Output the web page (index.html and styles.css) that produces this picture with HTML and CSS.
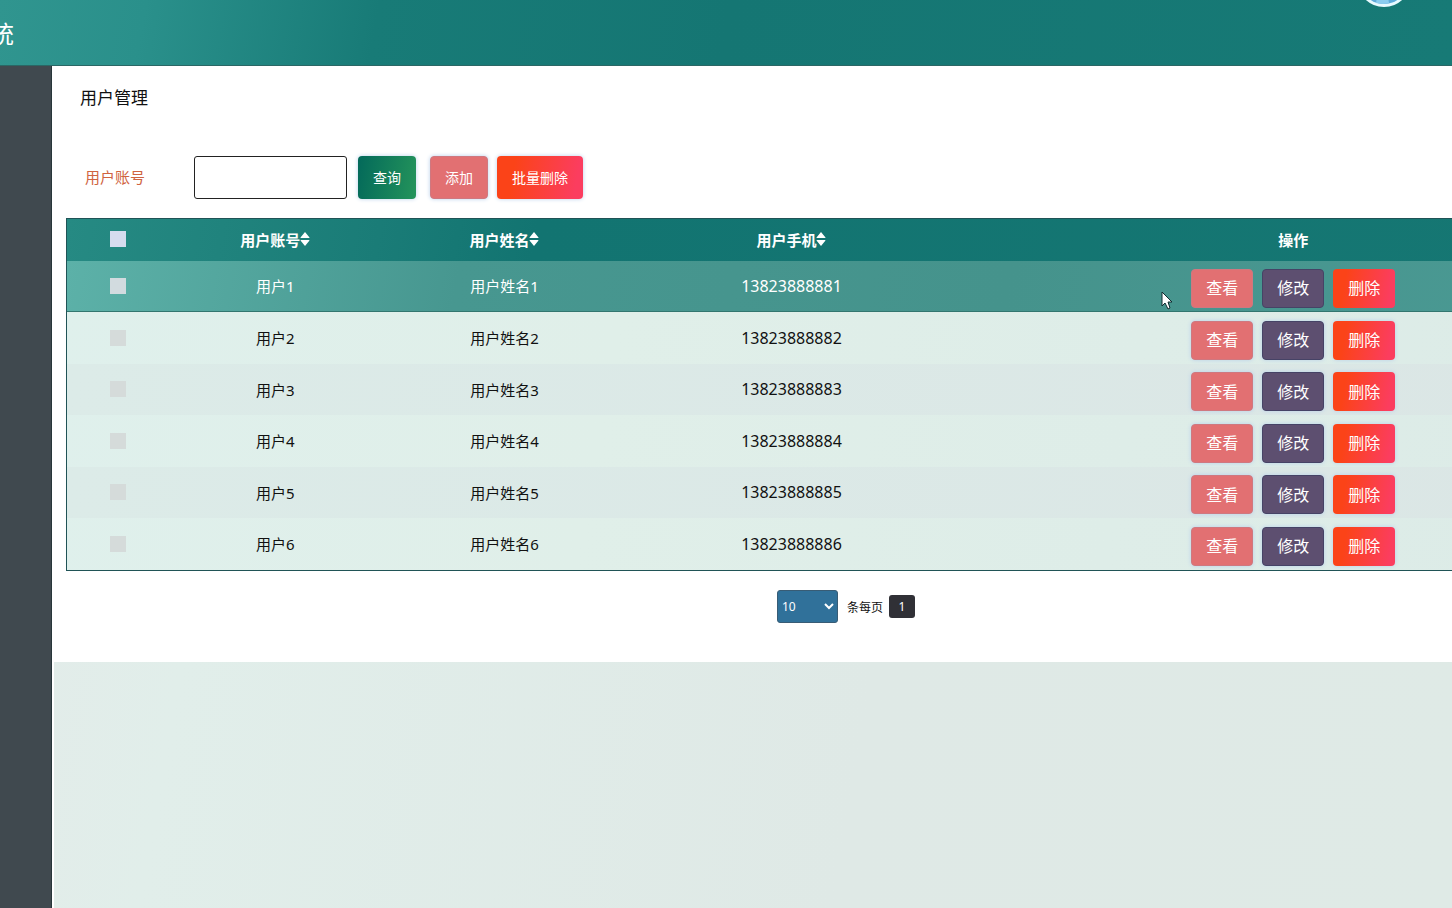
FILE: index.html
```html
<!DOCTYPE html>
<html lang="zh-CN">
<head>
<meta charset="utf-8">
<title>用户管理</title>
<link rel="stylesheet" href="styles.css">
</head>
<body>
<header class="topbar">
  <h1 class="brand">统</h1>
  <svg class="avatar" viewBox="0 0 54 54" aria-hidden="true">
    <circle cx="27" cy="27" r="27" fill="#e8faff"/>
    <circle cx="27" cy="27" r="24" fill="#5eabdb"/>
    <path d="M19 50q8 2 13 0l-1-6H20z" fill="#8ccdf0"/>
  </svg>
</header>
<div class="shell">
  <aside class="sidebar"></aside>
  <main class="content">
    <section class="panel">
      <div class="titlebar">
        <h2 class="title">用户管理</h2>
      </div>
      <form class="search">
        <label class="search-label" for="account">用户账号</label>
        <input class="search-input" id="account" type="text">
        <button class="btn btn-query" type="button">查询</button>
        <button class="btn btn-add" type="button">添加</button>
        <button class="btn btn-delete" type="button">批量删除</button>
      </form>
      <table class="grid">
        <colgroup><col class="c-check"><col class="c-account"><col class="c-name"><col class="c-phone"><col class="c-ops"></colgroup>
        <thead>
          <tr>
            <th><input class="check" type="checkbox" aria-label="全选"></th>
            <th><span class="sort">用户账号<svg class="arrows" viewBox="0 0 10 14" aria-hidden="true"><path d="M5 0L9.500 5.500Q9.500 6 9 6H1Q.5 6 .5 5.500zM5 14L.5 8.500Q.5 8 1 8H9Q9.500 8 9.500 8.500z"/></svg></span></th>
            <th><span class="sort">用户姓名<svg class="arrows" viewBox="0 0 10 14" aria-hidden="true"><path d="M5 0L9.500 5.500Q9.500 6 9 6H1Q.5 6 .5 5.500zM5 14L.5 8.500Q.5 8 1 8H9Q9.500 8 9.500 8.500z"/></svg></span></th>
            <th><span class="sort">用户手机<svg class="arrows" viewBox="0 0 10 14" aria-hidden="true"><path d="M5 0L9.500 5.500Q9.500 6 9 6H1Q.5 6 .5 5.500zM5 14L.5 8.500Q.5 8 1 8H9Q9.500 8 9.500 8.500z"/></svg></span></th>
            <th>操作</th>
          </tr>
        </thead>
        <tbody>
          <tr class="active"><td><input class="check" type="checkbox" aria-label="选择用户1"></td><td>用户1</td><td>用户姓名1</td><td class="phone">13823888881</td><td><div class="ops"><button class="btn op btn-add" type="button">查看</button><button class="btn op btn-edit" type="button">修改</button><button class="btn op btn-delete" type="button">删除</button></div></td></tr>
          <tr><td><input class="check" type="checkbox" aria-label="选择用户2"></td><td>用户2</td><td>用户姓名2</td><td class="phone">13823888882</td><td><div class="ops"><button class="btn op btn-add" type="button">查看</button><button class="btn op btn-edit" type="button">修改</button><button class="btn op btn-delete" type="button">删除</button></div></td></tr>
          <tr><td><input class="check" type="checkbox" aria-label="选择用户3"></td><td>用户3</td><td>用户姓名3</td><td class="phone">13823888883</td><td><div class="ops"><button class="btn op btn-add" type="button">查看</button><button class="btn op btn-edit" type="button">修改</button><button class="btn op btn-delete" type="button">删除</button></div></td></tr>
          <tr><td><input class="check" type="checkbox" aria-label="选择用户4"></td><td>用户4</td><td>用户姓名4</td><td class="phone">13823888884</td><td><div class="ops"><button class="btn op btn-add" type="button">查看</button><button class="btn op btn-edit" type="button">修改</button><button class="btn op btn-delete" type="button">删除</button></div></td></tr>
          <tr><td><input class="check" type="checkbox" aria-label="选择用户5"></td><td>用户5</td><td>用户姓名5</td><td class="phone">13823888885</td><td><div class="ops"><button class="btn op btn-add" type="button">查看</button><button class="btn op btn-edit" type="button">修改</button><button class="btn op btn-delete" type="button">删除</button></div></td></tr>
          <tr><td><input class="check" type="checkbox" aria-label="选择用户6"></td><td>用户6</td><td>用户姓名6</td><td class="phone">13823888886</td><td><div class="ops"><button class="btn op btn-add" type="button">查看</button><button class="btn op btn-edit" type="button">修改</button><button class="btn op btn-delete" type="button">删除</button></div></td></tr>
        </tbody>
      </table>
      <div class="pager">
        <select class="page-size" id="size"><option>10</option><option>20</option><option>50</option></select>
        <label class="page-label" for="size">条每页</label>
        <button class="page" type="button">1</button>
      </div>
    </section>
  </main>
</div>
<svg class="cursor" viewBox="0 0 12 19" aria-hidden="true"><path d="M1 1v14l3-3 3 6 2-1-2-6h4z" fill="#fff" stroke="#102c30" stroke-width="1"/></svg>
</body>
</html>
```
FILE: styles.css
```css
* { box-sizing: border-box; }
body {
  margin: 0;
  min-height: 100vh;
  display: flex;
  flex-direction: column;
  overflow: hidden;
  font-family: "Noto Sans", "Noto Sans CJK SC", sans-serif;
  font-size: 15px;
  color: #111;
}
button, input, select { font-family: inherit; }
.topbar {
  height: 66px;
  display: flex;
  justify-content: space-between;
  align-items: center;
  overflow: hidden;
  background: linear-gradient(100deg, #30958f 0%, #2a908b 10%, #187b77 26%, #157673 50%, #177a76 100%);
  border-bottom: 1px solid #2b6765;
}
.brand {
  margin: 0 0 0 -10px;
  font-size: 24px;
  font-weight: 400;
  color: #fff;
}
.avatar {
  width: 54px;
  height: 54px;
  align-self: flex-start;
  margin: -47px 41px 0 0;
}
.shell { flex: 1; display: flex; }
.sidebar {
  width: 52px;
  flex: none;
  background: #40494f;
  border-right: 1px solid #28363a;
}
.content {
  flex: 1;
  min-width: 0;
  overflow: hidden;
  border-left: 2px solid #fff;
  background: linear-gradient(100deg, #e3ebe9 0%, #e1eeea 15%, #dfe9e6 60%, #dfeae6 100%);
}
.panel {
  width: calc(100% + 192px);
  padding: 0 12px 39px;
  background: #fff;
}
.titlebar { height: 60px; display: flex; align-items: center; padding-left: 14px; }
.title { margin: 0; font-size: 17px; font-weight: 400; }
.search {
  display: flex;
  align-items: center;
  padding: 30px 0 19px 19px;
}
.search-label { width: 109px; padding-bottom: 2px; color: #cf6340; }
.search-input {
  width: 153px;
  height: 43px;
  margin-right: 11px;
  padding: 0 10px;
  border: 1px solid #222;
  border-radius: 3px;
  background: #fff;
}
.btn {
  height: 43px;
  padding: 0 15px 2px;
  border: 0;
  border-radius: 4px;
  color: #fff;
  font-size: 14px;
  white-space: nowrap;
  box-shadow: 0 0 4px #b9d0ea;
}
.btn-query { margin-right: 14px; width: 58px; background: linear-gradient(100deg, #03695a, #24945b); }
.btn-add { background: #e27072; border: 1px solid #cf7880; }
.search .btn-add { margin-right: 9px; width: 58px; padding: 0 0 2px; }
.btn-edit { background: #5d4f70; border: 1px solid #464366; }
.btn-delete { background: linear-gradient(100deg, #fb4318 20%, #fb3d5f 90%); }
.grid {
  width: 100%;
  table-layout: fixed;
  border-spacing: 0;
  border: 1px solid #205356;
  background: linear-gradient(100deg, #dff0ec, #e0efe9 35%, #dcebe7);
}
.c-check { width: 102px; }
.c-account { width: 13.6%; }
.c-name { width: 15.7%; }
.c-phone { width: 21%; }
.grid th, .grid td { padding: 0; text-align: center; vertical-align: middle; }
.grid th { height: 42px; padding-bottom: 2px; color: #fff; font-weight: 700; }
.grid thead tr { background: linear-gradient(100deg, #268a83 0%, #1a7c77 20%, #127471 30%, #167773 100%); }
.grid td { height: 52px; padding-bottom: 1px; }
.grid tr:nth-child(odd) td { height: 51px; }
.grid tbody tr:nth-child(odd) { background: linear-gradient(100deg, #dcebe8, #dbe6e5); }
.grid tbody tr.active { background: linear-gradient(100deg, #5cb1a8, #479790 25%, #45938c 60%, #4b9a94); color: #fff; }
.grid tr.active td { border-bottom: 1px solid #32766f; }
.grid .phone { font-size: 16px; }
.check {
  appearance: none;
  display: block;
  width: 16px;
  height: 16px;
  margin: 0 auto;
  background: #d5dbda;
}
thead .check { background: #d6dcee; }
.active .check { background: #d2dbdf; }
.sort { display: inline-flex; align-items: center; }
.arrows { width: 10px; height: 14px; fill: #fff; }
.ops { display: flex; justify-content: center; gap: 9px; padding-top: 5px; }
.op { width: 62px; height: 39px; padding: 0 0 2px; font-size: 16px; }
.active .op { box-shadow: none; }
.pager {
  display: flex;
  justify-content: center;
  align-items: center;
  padding: 19px 6px 0 0;
  font-size: 12px;
}
.page-size {
  width: 61px;
  height: 33px;
  padding: 0;
  border: 1px solid #385c75;
  border-radius: 3px;
  background: #30719a;
  color: #fff;
  font-size: 12px;
}
.page-label { margin: 0 6px 0 9px; }
.page {
  width: 26px;
  height: 23px;
  padding: 0;
  border: 0;
  border-radius: 3px;
  background: #303036;
  color: #fff;
  font-size: 12px;
}
.cursor { position: absolute; left: 1161px; top: 291px; width: 12px; height: 19px; }
```
